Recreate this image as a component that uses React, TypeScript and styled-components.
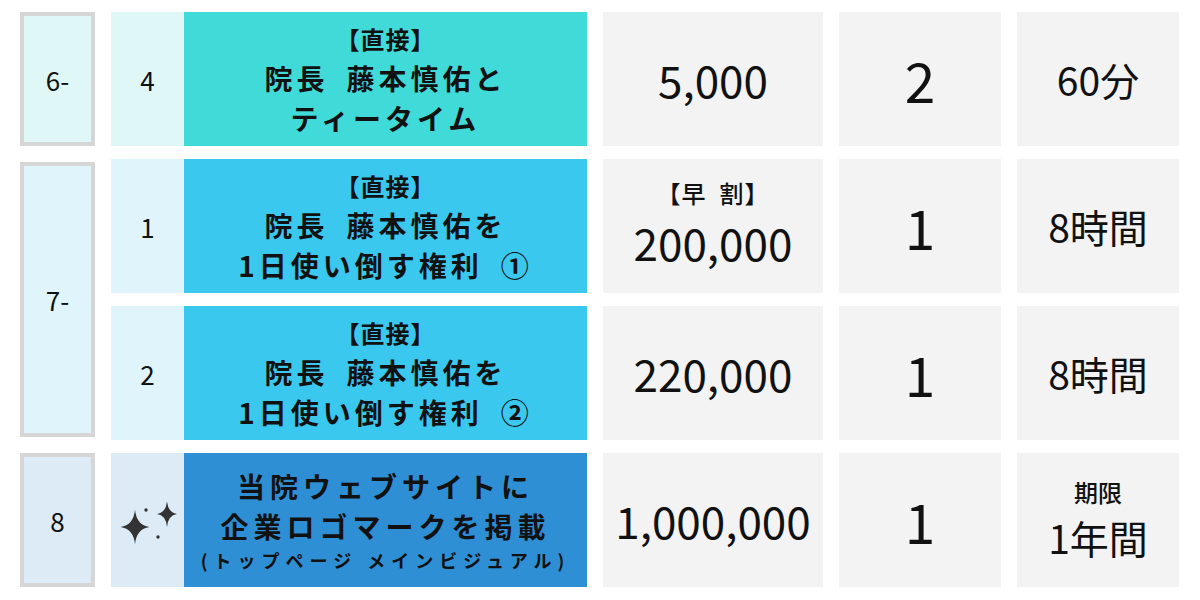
import styled, { createGlobalStyle } from 'styled-components';

const GlobalStyle = createGlobalStyle`
  body {
    margin: 0;
    background: #ffffff;
    font-family: "Noto Sans CJK JP", "Noto Sans", sans-serif;
    color: #111;
  }
`;

const Table = styled.div`
  display: grid;
  grid-template-columns: 75px 476px 220px 162px 162px;
  grid-template-rows: repeat(4, 134px);
  column-gap: 16px;
  row-gap: 13px;
  padding: 12px 0 0 20px;
  width: 1200px;
  height: 600px;
  box-sizing: border-box;
`;

const Group = styled.div<{ $bg: string; $span?: number }>`
  grid-row: span ${p => p.$span || 1};
  margin: ${p => (p.$span ? '3px 0' : '0')};
  box-sizing: border-box;
  border: 4px solid #d6d6d6;
  background: ${p => p.$bg};
  display: flex;
  align-items: center;
  justify-content: center;
  font-size: 26px;
`;

const Item = styled.div`
  display: flex;
`;

const Sub = styled.div<{ $bg: string }>`
  width: 73px;
  background: ${p => p.$bg};
  display: flex;
  align-items: center;
  justify-content: center;
  font-size: 26px;
`;

const Title = styled.div<{ $bg: string }>`
  flex: 1;
  background: ${p => p.$bg};
  display: flex;
  flex-direction: column;
  align-items: center;
  justify-content: center;
  font-weight: 700;
  color: #111;
  text-align: center;
`;

const Tag = styled.div`
  font-size: 24px;
  line-height: 38px;
  letter-spacing: 1px;
`;

const Line = styled.div<{ $size?: number; $spacing?: number }>`
  font-size: ${p => p.$size || 28}px;
  line-height: 40px;
  letter-spacing: ${p => p.$spacing || 4}px;
  white-space: nowrap;
`;

const Note = styled.div`
  font-size: 18px;
  line-height: 28px;
  letter-spacing: 6px;
  white-space: nowrap;
`;

const Cell = styled.div<{ $lift?: number }>`
  background: #f3f3f3;
  display: flex;
  flex-direction: column;
  align-items: center;
  justify-content: center;
  padding-bottom: ${p => p.$lift || 0}px;
`;

const Price = styled.div<{ $tall?: boolean }>`
  font-size: 44px;
  line-height: ${p => (p.$tall ? 64 : 48)}px;
`;

const Early = styled.div`
  font-size: 24px;
  line-height: 35px;
  letter-spacing: 1px;
  font-weight: 500;
`;

const Count = styled.div`
  font-size: 55px;
  line-height: 60px;
`;

const Duration = styled.div<{ $tall?: boolean }>`
  font-size: 39px;
  line-height: ${p => (p.$tall ? 57 : 44)}px;
`;

const Limit = styled.div`
  font-size: 24px;
  line-height: 35px;
  font-weight: 500;
`;

const star = (cx: number, cy: number, w: number, h: number) =>
  `M${cx} ${cy - h} Q${cx + w * 0.1} ${cy - h * 0.1} ${cx + w} ${cy} ` +
  `Q${cx + w * 0.1} ${cy + h * 0.1} ${cx} ${cy + h} ` +
  `Q${cx - w * 0.1} ${cy + h * 0.1} ${cx - w} ${cy} ` +
  `Q${cx - w * 0.1} ${cy - h * 0.1} ${cx} ${cy - h} Z`;

const SparkleIcon = styled.svg`
  margin-top: 8px;
`;

const Sparkles = () => (
  <SparkleIcon width="58" height="44" viewBox="0 0 58 44">
    <g fill="#333">
      <path d={star(16, 25, 14.5, 17.5)} />
      <path d={star(48, 12, 10, 13)} />
      <circle cx="27" cy="8" r="1.7" />
      <circle cx="39" cy="35" r="1.7" />
    </g>
  </SparkleIcon>
);

const ES = '\u2002';

export default function App() {
  return (
    <>
      <GlobalStyle />
      <Table>
        <Group $bg="#e0f7f8">6-</Group>
        <Item>
          <Sub $bg="#e0f7f8">4</Sub>
          <Title $bg="#40dbd8">
            <Tag>【直接】</Tag>
            <Line>院長{ES}藤本慎佑と</Line>
            <Line>ティータイム</Line>
          </Title>
        </Item>
        <Cell><Price>5,000</Price></Cell>
        <Cell><Count>2</Count></Cell>
        <Cell><Duration>60分</Duration></Cell>

        <Group $bg="#e0f4fb" $span={2}>7-</Group>
        <Item>
          <Sub $bg="#e0f4fb">1</Sub>
          <Title $bg="#3ac8ef">
            <Tag>【直接】</Tag>
            <Line>院長{ES}藤本慎佑を</Line>
            <Line>1日使い倒す権利{ES}①</Line>
          </Title>
        </Item>
        <Cell $lift={4}>
          <Early>【早{ES}割】</Early>
          <Price $tall>200,000</Price>
        </Cell>
        <Cell><Count>1</Count></Cell>
        <Cell><Duration>8時間</Duration></Cell>

        <Item>
          <Sub $bg="#e0f4fb">2</Sub>
          <Title $bg="#3ac8ef">
            <Tag>【直接】</Tag>
            <Line>院長{ES}藤本慎佑を</Line>
            <Line>1日使い倒す権利{ES}②</Line>
          </Title>
        </Item>
        <Cell><Price>220,000</Price></Cell>
        <Cell><Count>1</Count></Cell>
        <Cell><Duration>8時間</Duration></Cell>

        <Group $bg="#ddebf7">8</Group>
        <Item>
          <Sub $bg="#ddebf7"><Sparkles /></Sub>
          <Title $bg="#2e8fd5">
            <Line $size={28} $spacing={5}>当院ウェブサイトに</Line>
            <Line $size={28} $spacing={5}>企業ロゴマークを掲載</Line>
            <Note>(トップページ メインビジュアル)</Note>
          </Title>
        </Item>
        <Cell><Price>1,000,000</Price></Cell>
        <Cell><Count>1</Count></Cell>
        <Cell>
          <Limit>期限</Limit>
          <Duration $tall>1年間</Duration>
        </Cell>
      </Table>
    </>
  );
}
